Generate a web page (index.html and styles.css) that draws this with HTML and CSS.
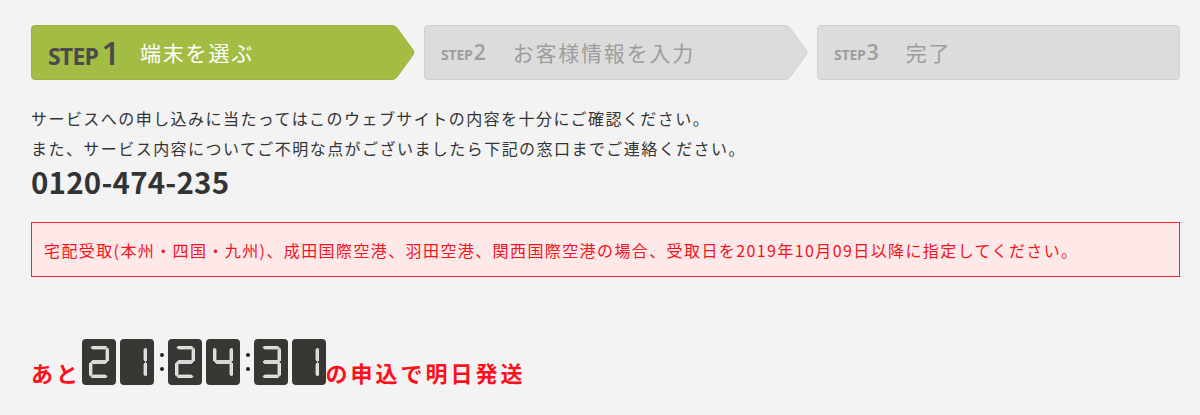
FILE: index.html
```html
<!DOCTYPE html>
<html lang="ja">
<head>
<meta charset="utf-8">
<title>STEP1 端末を選ぶ</title>
<link rel="stylesheet" href="styles.css">
</head>
<body>
<svg class="defs" width="0" height="0" aria-hidden="true">
  <defs>
    <polygon id="sa" points="2,1.5 3.5,0 16.5,0 18,1.5 16.5,3 3.5,3"/>
    <polygon id="sg" points="2,16 3.5,14.5 16.5,14.5 18,16 16.5,17.5 3.5,17.5"/>
    <polygon id="sd" points="2,30.5 3.5,29 16.5,29 18,30.5 16.5,32 3.5,32"/>
    <polygon id="sf" points="1.5,2 3,3.5 3,14 1.5,15.5 0,14 0,3.5"/>
    <polygon id="sb" points="18.5,2 20,3.5 20,14 18.5,15.5 17,14 17,3.5"/>
    <polygon id="se" points="1.5,16.5 3,18 3,28.5 1.5,30 0,28.5 0,18"/>
    <polygon id="sc" points="18.5,16.5 20,18 20,28.5 18.5,30 17,28.5 17,18"/>
  </defs>
</svg>
<div class="page">
  <div class="steps">
    <div class="step step-1">
      <svg class="step-bg" viewBox="0 0 384 55" preserveAspectRatio="none"><path d="M4,0.5 H361 Q364,0.5 366,3 L382,25 Q384,27.5 382,30 L366,52 Q364,54.5 361,54.5 H4 Q0.5,54.5 0.5,51 V4 Q0.5,0.5 4,0.5 Z" fill="#a3bd44" stroke="#9ab23f"/></svg>
      <span class="step-label"><span class="step-word">STEP</span><span class="step-no">1</span></span>
      <span class="step-title">端末を選ぶ</span>
    </div>
    <div class="step step-2">
      <svg class="step-bg" viewBox="0 0 384 55" preserveAspectRatio="none"><path d="M4,0.5 H361 Q364,0.5 366,3 L382,25 Q384,27.5 382,30 L366,52 Q364,54.5 361,54.5 H4 Q0.5,54.5 0.5,51 V4 Q0.5,0.5 4,0.5 Z" fill="#dcdcdc" stroke="#d0d0d0"/></svg>
      <span class="step-label"><span class="step-word">STEP</span><span class="step-no">2</span></span>
      <span class="step-title">お客様情報を入力</span>
    </div>
    <div class="step step-3">
      <span class="step-label"><span class="step-word">STEP</span><span class="step-no">3</span></span>
      <span class="step-title">完了</span>
    </div>
  </div>

  <div class="intro">
    <p class="intro-line">サービスへの申し込みに当たってはこのウェブサイトの内容を十分にご確認ください。</p>
    <p class="intro-line">また、サービス内容についてご不明な点がございましたら下記の窓口までご連絡ください。</p>
    <p class="phone">0120-474-235</p>
  </div>

  <div class="notice">宅配受取(本州・四国・九州)、成田国際空港、羽田空港、関西国際空港の場合、受取日を2019年10月09日以降に指定してください。</div>

  <div class="countdown">
    <span class="cd-text cd-before">あと</span>
    <span class="cd-digit"><svg viewBox="0 0 20 32"><use href="#sa"/><use href="#sb"/><use href="#sg"/><use href="#se"/><use href="#sd"/></svg></span>
    <span class="cd-digit"><svg viewBox="0 0 20 32"><use href="#sb"/><use href="#sc"/></svg></span>
    <span class="cd-colon"><i></i><i></i></span>
    <span class="cd-digit"><svg viewBox="0 0 20 32"><use href="#sa"/><use href="#sb"/><use href="#sg"/><use href="#se"/><use href="#sd"/></svg></span>
    <span class="cd-digit"><svg viewBox="0 0 20 32"><use href="#sf"/><use href="#sg"/><use href="#sb"/><use href="#sc"/></svg></span>
    <span class="cd-colon"><i></i><i></i></span>
    <span class="cd-digit"><svg viewBox="0 0 20 32"><use href="#sa"/><use href="#sb"/><use href="#sg"/><use href="#sc"/><use href="#sd"/></svg></span>
    <span class="cd-digit cd-last"><svg viewBox="0 0 20 32"><use href="#sb"/><use href="#sc"/></svg></span>
    <span class="cd-text cd-after">の申込で明日発送</span>
  </div>
</div>
</body>
</html>
```

FILE: styles.css
```css
html,
body {
  margin: 0;
  background: #f3f3f3;
}

body {
  font-family: "Noto Sans CJK JP", "Noto Sans", sans-serif;
  color: #333;
}

.defs {
  position: absolute;
  width: 0;
  height: 0;
}

.page {
  width: 1149px;
  padding: 25px 0 20px 31px;
}

/* steps */
.steps {
  display: flex;
  gap: 9px;
  height: 55px;
}

.step {
  position: relative;
  display: flex;
  align-items: center;
  box-sizing: border-box;
  padding-left: 17px;
}

.step-1,
.step-2 {
  width: 384px;
}

.step-3 {
  flex: 1;
  padding-left: 16px;
  background: #dcdcdc;
  border: 1px solid #d0d0d0;
  border-radius: 4px;
}

.step-bg {
  position: absolute;
  left: 0;
  top: 0;
  width: 100%;
  height: 100%;
}

.step-label,
.step-title {
  position: relative;
}

.step-label {
  display: flex;
  align-items: baseline;
  font-family: "Open Sans", sans-serif;
  font-weight: 700;
  color: #9d9d9d;
  line-height: 1;
}

.step-word {
  font-size: 14px;
  letter-spacing: -0.2px;
}

.step-no {
  font-size: 21px;
  font-weight: 600;
  margin-left: 1px;
}

.step-title {
  font-size: 21px;
  letter-spacing: 1.8px;
  color: #9d9d9d;
  margin-left: 27px;
  line-height: 1;
}

.step-1 .step-label {
  color: #4b4b4b;
}

.step-1 .step-word {
  font-size: 23px;
  letter-spacing: -0.8px;
}

.step-1 .step-no {
  font-size: 33px;
  margin-left: 3px;
}

.step-1 .step-title {
  color: #fff;
  margin-left: 20px;
}

/* intro */
.intro {
  margin-top: 23px;
}

.intro-line {
  margin: 0;
  font-size: 16px;
  line-height: 30px;
  letter-spacing: 1.45px;
  color: #333;
}

.phone {
  margin: 0;
  font-size: 29.5px;
  font-weight: 700;
  line-height: 36px;
  letter-spacing: 0.2px;
  color: #333;
}

/* notice */
.notice {
  margin-top: 23px;
  height: 55px;
  box-sizing: border-box;
  display: flex;
  align-items: center;
  padding: 0 12px;
  background: #ffe8e8;
  border: 1px solid #f4222c;
  color: #f0141e;
  font-size: 16px;
  letter-spacing: 1.4px;
}

/* countdown */
.countdown {
  margin-top: 62px;
  display: flex;
  align-items: flex-end;
}

.cd-text {
  color: #ff0f1b;
  font-size: 22px;
  font-weight: 700;
  line-height: 26px;
  letter-spacing: 3px;
}

.cd-before {
  margin-right: 1px;
}

.cd-after {
  margin-left: 0;
}

.cd-digit {
  width: 34px;
  height: 46px;
  box-sizing: border-box;
  padding: 7px;
  background: #393734;
  border-radius: 4px;
  display: flex;
  margin-right: 3.5px;
}

.cd-last {
  margin-right: 0;
}

.cd-digit svg {
  width: 20px;
  height: 32px;
  fill: #d6d6d6;
  stroke: #ffffff;
  stroke-width: 0.7;
}

.cd-colon {
  width: 9px;
  height: 46px;
  display: flex;
  flex-direction: column;
  align-items: center;
  justify-content: center;
  gap: 10px;
  margin-right: 2px;
}

.cd-colon i {
  width: 4px;
  height: 4px;
  border-radius: 50%;
  background: #222;
}
```
